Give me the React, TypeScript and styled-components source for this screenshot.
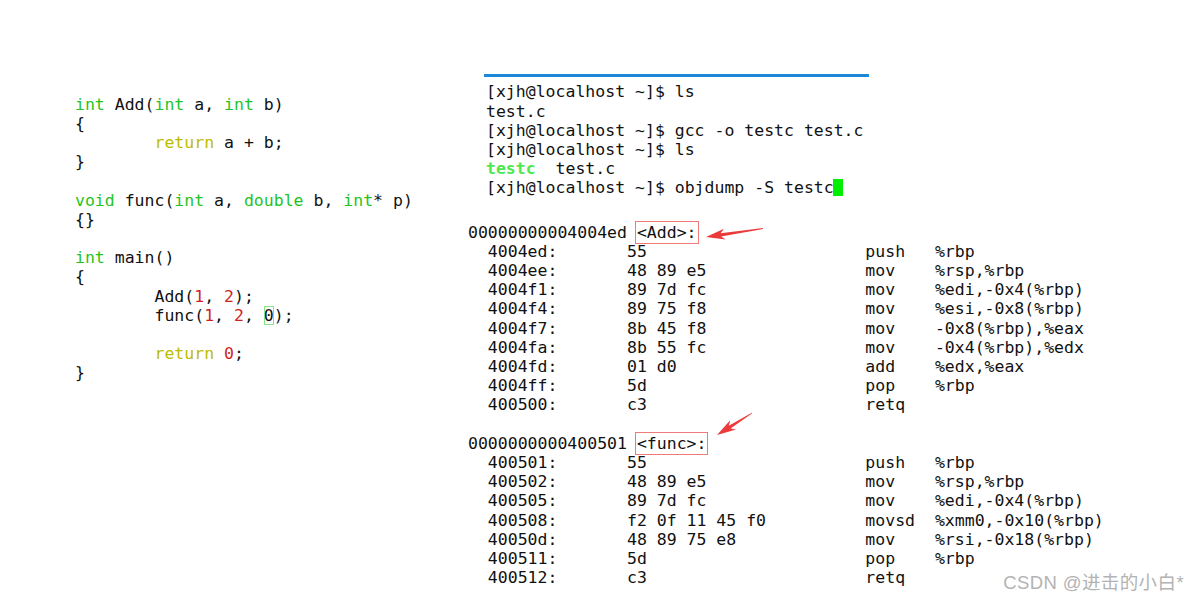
import styled, { createGlobalStyle } from "styled-components";

const GlobalStyle = createGlobalStyle`
  html, body {
    margin: 0;
    padding: 0;
    background: #ffffff;
  }
`;

const green = "#1fc41f";
const yellow = "#bcbc00";
const red = "#d01f1f";

type Tok = [string, string?];

const sourceLines: Tok[][] = [
  [["int", green], [" Add("], ["int", green], [" a, "], ["int", green], [" b)"]],
  [["{"]],
  [["        "], ["return", yellow], [" a + b;"]],
  [["}"]],
  [[""]],
  [["void", green], [" func("], ["int", green], [" a, "], ["double", green], [" b, "], ["int", green], ["* p)"]],
  [["{}"]],
  [[""]],
  [["int", green], [" main()"]],
  [["{"]],
  [["        Add("], ["1", red], [", "], ["2", red], [");"]],
  [["        func("], ["1", red], [", "], ["2", red], [", "], ["0", "box"], [");"]],
  [[""]],
  [["        "], ["return", yellow], [" "], ["0", red], [";"]],
  [["}"]],
];

const pad = (s: string, n: number) => s + " ".repeat(Math.max(0, n - s.length));

const row = (addr: string, bytes: string, op: string, args: string) =>
  (pad(pad(pad("  " + addr, 16) + bytes, 40) + op, 47) + args).trimEnd();

const addRows = [
  row("4004ed:", "55", "push", "%rbp"),
  row("4004ee:", "48 89 e5", "mov", "%rsp,%rbp"),
  row("4004f1:", "89 7d fc", "mov", "%edi,-0x4(%rbp)"),
  row("4004f4:", "89 75 f8", "mov", "%esi,-0x8(%rbp)"),
  row("4004f7:", "8b 45 f8", "mov", "-0x8(%rbp),%eax"),
  row("4004fa:", "8b 55 fc", "mov", "-0x4(%rbp),%edx"),
  row("4004fd:", "01 d0", "add", "%edx,%eax"),
  row("4004ff:", "5d", "pop", "%rbp"),
  row("400500:", "c3", "retq", ""),
];

const funcRows = [
  row("400501:", "55", "push", "%rbp"),
  row("400502:", "48 89 e5", "mov", "%rsp,%rbp"),
  row("400505:", "89 7d fc", "mov", "%edi,-0x4(%rbp)"),
  row("400508:", "f2 0f 11 45 f0", "movsd", "%xmm0,-0x10(%rbp)"),
  row("40050d:", "48 89 75 e8", "mov", "%rsi,-0x18(%rbp)"),
  row("400511:", "5d", "pop", "%rbp"),
  row("400512:", "c3", "retq", ""),
];

const arrowPoints = (tail: [number, number], tip: [number, number]) => {
  const dx = tip[0] - tail[0];
  const dy = tip[1] - tail[1];
  const len = Math.hypot(dx, dy);
  const ux = dx / len;
  const uy = dy / len;
  const nx = -uy;
  const ny = ux;
  const p = (back: number, side: number) =>
    `${(tip[0] - ux * back + nx * side).toFixed(1)},${(tip[1] - uy * back + ny * side).toFixed(1)}`;
  return [
    p(0, 0),
    p(19, 5.5),
    p(15, 1.6),
    `${(tail[0] + nx * 0.4).toFixed(1)},${(tail[1] + ny * 0.4).toFixed(1)}`,
    `${(tail[0] - nx * 0.4).toFixed(1)},${(tail[1] - ny * 0.4).toFixed(1)}`,
    p(15, -1.6),
    p(19, -5.5),
  ].join(" ");
};

const App = () => {
  return (
    <>
      <GlobalStyle />
      <Page>
        <Source>
          {sourceLines.map((line, i) => (
            <Row key={i}>
              {line.map(([text, color], j) =>
                color === "box" ? (
                  <Boxed key={j}>{text}</Boxed>
                ) : (
                  <Tint key={j} $color={color}>
                    {text}
                  </Tint>
                )
              )}
            </Row>
          ))}
        </Source>

        <Right>
          <TitleBar />
          <Terminal>
            <Row>[xjh@localhost ~]$ ls</Row>
            <Row>test.c</Row>
            <Row>[xjh@localhost ~]$ gcc -o testc test.c</Row>
            <Row>[xjh@localhost ~]$ ls</Row>
            <Row>
              <Exe>testc</Exe>
              {"  test.c"}
            </Row>
            <Row>
              {"[xjh@localhost ~]$ objdump -S testc"}
              <Cursor />
            </Row>
          </Terminal>

          <Dump>
            <Row>
              {"00000000004004ed "}
              <Label>{"<Add>:"}</Label>
            </Row>
            {addRows.map((r, i) => (
              <Row key={`a${i}`}>{r}</Row>
            ))}
            <Row />
            <Row>
              {"0000000000400501 "}
              <Label>{"<func>:"}</Label>
            </Row>
            {funcRows.map((r, i) => (
              <Row key={`f${i}`}>{r}</Row>
            ))}
          </Dump>
        </Right>

        <Arrows width="1199" height="601" viewBox="0 0 1199 601">
          <polygon points={arrowPoints([763, 228.5], [706, 237])} fill="#ec3a3a" />
          <polygon points={arrowPoints([752, 413], [717, 435])} fill="#ec3a3a" />
        </Arrows>

        <Watermark>CSDN @进击的小白*</Watermark>
      </Page>
    </>
  );
};

const Page = styled.div`
  position: relative;
  width: 1199px;
  height: 601px;
  overflow: hidden;
  box-sizing: border-box;
  padding: 74px 0 0 75px;
  display: grid;
  grid-template-columns: 393px 1fr;
  align-items: start;
  background: #ffffff;
`;

const Code = styled.div`
  font-family: "DejaVu Sans Mono", "Liberation Mono", monospace;
  font-size: 16.5px;
  line-height: 19.2px;
  color: #111111;
  white-space: pre;
  display: flex;
  flex-direction: column;
  align-items: flex-start;
`;

const Row = styled.div`
  min-height: 19.2px;
`;

const Source = styled(Code)`
  margin-top: 20.6px;
`;

const Tint = styled.span<{ $color?: string }>`
  color: ${(p) => p.$color ?? "inherit"};
`;

const Boxed = styled.span`
  outline: 1px solid #86e586;
  outline-offset: -1px;
`;

const Right = styled.div`
  display: flex;
  flex-direction: column;
  align-items: flex-start;
`;

const TitleBar = styled.div`
  margin-left: 16px;
  width: 385px;
  height: 3px;
  background: #1b88da;
`;

const Terminal = styled(Code)`
  margin-top: 5.4px;
  padding-left: 18px;
`;

const Exe = styled.span`
  color: #4fe84f;
  font-weight: bold;
`;

const Cursor = styled.span`
  display: inline-block;
  width: 10px;
  height: 17px;
  margin-left: -1px;
  vertical-align: -3px;
  background: #00ee00;
`;

const Dump = styled(Code)`
  margin-top: 24.9px;
`;

const Label = styled.span`
  outline: 1px solid #f07a7a;
  outline-offset: 1px;
`;

const Arrows = styled.svg`
  position: absolute;
  left: 0;
  top: 0;
  pointer-events: none;
`;

const Watermark = styled.div`
  position: absolute;
  right: 15px;
  bottom: 7px;
  font-family: "Liberation Sans", "Noto Sans CJK SC", sans-serif;
  font-size: 18.5px;
  color: #b3b3b3;
  letter-spacing: 0.4px;
`;

export default App;
